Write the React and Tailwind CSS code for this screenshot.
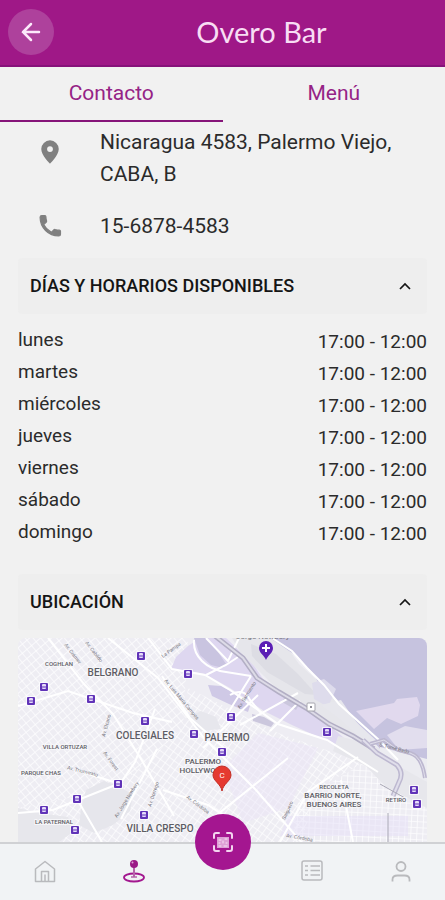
import { useState } from 'react';

const hours = [
  { day: 'lunes', time: '17:00 - 12:00' },
  { day: 'martes', time: '17:00 - 12:00' },
  { day: 'miércoles', time: '17:00 - 12:00' },
  { day: 'jueves', time: '17:00 - 12:00' },
  { day: 'viernes', time: '17:00 - 12:00' },
  { day: 'sábado', time: '17:00 - 12:00' },
  { day: 'domingo', time: '17:00 - 12:00' },
];

// map drawing units: 409 wide, origin at the top left corner of the map
const stations = [
  [123, 18], [170, 36], [26, 49], [13, 63], [73, 61], [127, 83], [176, 96], [213, 79], [309, 94],
  [204, 114], [100, 146], [59, 161], [26, 172], [126, 177], [57, 192], [396, 152], [399, 166],
];

const places = [
  { name: 'COGHLAN', x: 41, y: 28, small: true },
  { name: 'BELGRANO', x: 95, y: 38 },
  { name: 'COLEGIALES', x: 127, y: 101 },
  { name: 'PALERMO', x: 209, y: 103 },
  { name: 'VILLA ORTUZAR', x: 47, y: 111, small: true },
  { name: 'PARQUE CHAS', x: 23, y: 137, small: true },
  { name: 'PALERMO', x: 185, y: 126, medium: true },
  { name: 'HOLLYWOOD', x: 185, y: 135, medium: true },
  { name: 'LA PATERNAL', x: 36, y: 186, small: true },
  { name: 'VILLA CRESPO', x: 142, y: 194 },
  { name: 'RECOLETA', x: 316, y: 151, small: true },
  { name: 'BARRIO NORTE,', x: 315, y: 160, medium: true },
  { name: 'BUENOS AIRES', x: 316, y: 169, medium: true },
  { name: 'RETIRO', x: 378, y: 164, small: true },
];

const streets = [
  { name: 'Av. Crámer', x: 46, y: 7, angle: 52 },
  { name: 'Av. Cabildo', x: 67, y: 5, angle: 52 },
  { name: 'La Pampa', x: 145, y: 20, angle: -36 },
  { name: 'Av. Luis María Campos', x: 146, y: 43, angle: 50 },
  { name: 'Av. Elcano', x: 87, y: 99, angle: -75 },
  { name: 'Av. Forest', x: 85, y: 115, angle: 54 },
  { name: 'Av. Triunvirato', x: 49, y: 131, angle: 14 },
  { name: 'Av. Jorge Newbery', x: 99, y: 180, angle: -58 },
  { name: 'Av. Dorrego', x: 133, y: 169, angle: -72 },
  { name: 'Av. Córdoba', x: 168, y: 160, angle: 36 },
  { name: 'Av. Sarmiento', x: 222, y: 71, angle: -58 },
  { name: 'Av. Córdoba', x: 268, y: 199, angle: 10 },
  { name: 'Salguero', x: 267, y: 182, angle: -65 },
  { name: 'S. Tomé Bado', x: 361, y: 108, angle: 14 },
];

function Panel({ title, children }) {
  const [open, setOpen] = useState(true);

  return (
    <section>
      <h2>
        <button
          type="button"
          aria-expanded={open}
          onClick={() => setOpen(!open)}
          className="flex h-14 w-full items-center justify-between rounded-sm bg-[#eeeeee] pr-4 pl-3 text-lg font-medium text-[#151515]"
        >
          {title}
          <svg viewBox="0 0 12 12" className="size-3" fill="none" stroke="currentColor" strokeWidth="1.7">
            <path d="M1 9l5-5 5 5" />
          </svg>
        </button>
      </h2>
      {open && children}
    </section>
  );
}

function LocationMap() {
  return (
    <svg
      viewBox="0 0 409 262"
      role="img"
      aria-label="Mapa de Palermo"
      className="mt-2 block h-auto w-full rounded-lg font-['Roboto',sans-serif]"
    >
      <defs>
        <pattern id="gridWest" width="7" height="6" patternUnits="userSpaceOnUse" patternTransform="rotate(50)">
          <path d="M0 0H7M0 0V6" stroke="#fdfdfe" strokeWidth="1.6" />
        </pattern>
        <pattern id="gridMid" width="6" height="7" patternUnits="userSpaceOnUse" patternTransform="rotate(36)">
          <path d="M0 0H6M0 0V7" stroke="#fdfdfe" strokeWidth="1.6" />
        </pattern>
        <pattern id="gridEast" width="6" height="6" patternUnits="userSpaceOnUse" patternTransform="rotate(3)">
          <path d="M0 0H6M0 0V6" stroke="#fdfdfe" strokeWidth="1.6" />
        </pattern>
      </defs>

      <rect width="409" height="262" fill="#eeedf3" />
      <path d="M0 0H170L165 90L100 150L0 170Z" fill="url(#gridWest)" />
      <path d="M170 50L260 95L345 125L300 150L265 262H60L100 150L165 90Z" fill="url(#gridMid)" />
      <path d="M345 125L409 170V262H265L280 165Z" fill="url(#gridEast)" />
      <path d="M0 170L100 150L60 262H0Z" fill="url(#gridMid)" />
      <path d="M205 130l35-35 60 15-30 60-45 15z" fill="#e9e3f7" opacity=".45" />
      <path d="M270 178h120v20H262z" fill="#e6dff8" opacity=".5" />

      {/* parks and open ground */}
      <path d="M68 152l18-9 16 6 13 8-3 16-17 14-19 8-15-8 2-16z" fill="#e6e6ec" />
      <path d="M0 170l20 5 30 4 5 15-14 10H0z" fill="#e7e7ec" />
      <path d="M168 80l15-7 15 6 5 12-20 2z" fill="#e7e7ed" />
      <path d="M153 31l5-12 12-11 12-8h26l27 26 12 18 30 18 22 15 33 28-12 3-46-21-28-14-34-23-25-14-10-2z" fill="#ded7f0" />
      <path d="M176 0h12l12 14 8 12-3 4-12-3-11-10z" fill="#c9c4e0" />
      <path d="M190 47l13 1 17 9 12 11-2 6-19-8-17-8z" fill="#cfc9e6" />
      <path d="M234 76l12 3 10 6-3 4-18-6zM268 56l14 9-4 7-14-8z" fill="#cbc7dd" />
      <path d="M214 0h40l17 12 10 14 20 18 21 24 24 14 28 28-14-2-52-26-45-27-17-17-24-24z" fill="#e6e6eb" />
      <path d="M233 6l25 10 22 20 19 21-12-1-38-22-15-16z" fill="#dddde4" />
      <path d="M320 98l32 8 57 27v37l-42-22-19-20-33-15z" fill="#e7e7ec" />

      {/* river and docks */}
      <path d="M252 0h157v133l-46-21-23-26-14-17-16-17-8-5-8-13-14-15z" fill="#c6c3df" />
      <path d="M294 45l12-4 12 10-8 18-14-8z" fill="#dedcec" />
      <path d="M303 67l20-5 15 22 24 22-16-3-24-22z" fill="#e7e7ed" />
      <path d="M338 73l38-8 3-4 20-2 3 8-2 11-17 8-14-6-13 11z" fill="#e1d9ee" />
      <path d="M369 97l18-9 22 4v18l-28 2z" fill="#e2deee" />
      <path d="M362 109l47 12v23l-27-15-21-10z" fill="#ececf1" />

      {/* avenues */}
      <g fill="none" stroke="#ffffff" strokeWidth="2">
        <path d="M30 0l36 46 29 30 28 45 33 57M90 0l50 40 46 60 52 52 47 54" />
        <path d="M0 68l50-15 65 22 39 9M58 132l44 14 15-22 20-53M130 0l24 31 33 6 25 15 48 34 49 16 51 32" />
        <path d="M103 181l36-70M144 38l28 42 34 30M145 152l45 15 33 22M188 0l22 23 11-23M210 75l23-37M185 110l55-53M222 87l58-32M252 93l30-30" />
        <path d="M100 146l-65 26-35 3M59 161l25 43M262 204l28-50 50-35M335 204l-12-62M195 180l75-60" />
        <path d="M176 2q-1 12 8 21t24 11l25 4M188 37l20-10 12-8M212 57q14-8 20 5l12 14" />
        <path d="M254 0l20 13 15 17 17 17 15 19 40 36 19 20" />
      </g>

      {/* railway and motorway */}
      <g fill="none">
        <path d="M197 -2l28 22 14 20 22 14 27 16 23 16 24 12 21 13" stroke="#b3afc5" strokeWidth="5" />
        <path d="M197 -2l28 22 14 20 22 14 27 16 23 16 24 12 21 13" stroke="#dddbe7" strokeWidth="2" />
        <path d="M345 102l14 13 20 12q7 8 2 17l-6 14" stroke="#bdb8d0" strokeWidth="5" />
        <path d="M345 102l14 13 20 12q7 8 2 17l-6 14" stroke="#e0deeb" strokeWidth="2" />
        <path d="M352 106l14-4 14 10 12 3q12 3 15 25" stroke="#bdb8d0" strokeWidth="4" />
        <path d="M352 106l14-4 14 10 12 3q12 3 15 25" stroke="#e0deeb" strokeWidth="1" />
        <path d="M362 146l25 14M370 175v29" stroke="#a9a8b5" strokeWidth="1" />
      </g>
      <rect x="289" y="65" width="8" height="8" rx="1" fill="#ffffff" stroke="#a6a5ae" />
      <rect x="292" y="68" width="2" height="2" fill="#8d8d96" />

      <g fill="#77767e" fontSize="5">
        {streets.map(({ name, x, y, angle }) => (
          <text key={`${name}-${x}`} transform={`translate(${x} ${y}) rotate(${angle})`}>
            {name}
          </text>
        ))}
        <text x="218" y="1" fontSize="8">Jorge Newbery</text>
      </g>

      <g fill="#5d5c64" textAnchor="middle" stroke="#f6f6f9" strokeWidth="2" paintOrder="stroke">
        {places.map(({ name, x, y, small, medium }) => (
          <text key={`${name}-${y}`} x={x} y={y} fontSize={small ? 6 : medium ? 8 : 10} fontWeight="500">
            {name}
          </text>
        ))}
      </g>

      {stations.map(([x, y]) => (
        <g key={`${x}-${y}`} transform={`translate(${x} ${y})`}>
          <rect x="-5" y="-5" width="10" height="10" rx="1" fill="#ffffff" opacity=".7" />
          <rect x="-4" y="-4" width="8" height="8" rx="1" fill="#6134b8" />
          <rect x="-2" y="-3" width="4" height="5" rx="1" fill="#e6dcfa" />
          <path d="M-2 0h4" stroke="#6134b8" strokeWidth="1" />
        </g>
      ))}

      {/* airport */}
      <path d="M248 22c-2-5-7-7-7-12a7 7 0 0 1 14 0c0 5-5 7-7 12z" fill="#5b1fb5" />
      <path d="M248 6v8M244 10h8" stroke="#ffffff" strokeWidth="2" />

      {/* bar location */}
      <path d="M204 153c-1-7-9-10-9-16a9 9 0 0 1 18 0c0 6-8 9-9 16z" fill="#e53a30" stroke="#c22f27" strokeWidth="1" />
      <text x="204" y="140" textAnchor="middle" fontSize="8" fill="#ffffff">C</text>
    </svg>
  );
}

function BottomNav() {
  return (
    <nav className="grid h-[58px] shrink-0 grid-cols-5 items-center border-t-2 border-[#d0d1d4] bg-[#f1f3f5] text-[#b9babd]">
      <a href="#inicio" aria-label="Inicio" className="flex justify-center">
        <svg viewBox="0 0 24 24" className="size-6" fill="none" stroke="currentColor" strokeWidth="1.5" strokeLinejoin="round">
          <path d="M2.500 9L12 1.500 21.500 9v12.500h-19z" />
          <path d="M8.500 21.500v-10h7v10M12 14.500v7" />
        </svg>
      </a>
      <a href="#lugares" aria-label="Lugares" className="flex justify-center">
        <svg viewBox="0 0 24 24" className="size-6" fill="none" stroke="#a3178f">
          <ellipse cx="12" cy="17.500" rx="10" ry="4" strokeWidth="1.800" />
          <path d="M12 7v10" stroke="#b565aa" strokeWidth="2" />
          <path d="M9 17h6" stroke="#b565aa" strokeWidth="1.500" />
          <circle cx="12" cy="4" r="4" fill="#9b1a86" stroke="none" />
          <circle cx="10.500" cy="2.500" r="1" fill="#dda6d6" stroke="none" />
        </svg>
      </a>
      <div className="flex justify-center">
        <button
          type="button"
          aria-label="Escanear código"
          className="relative bottom-[30px] flex size-14 shrink-0 items-center justify-center rounded-full bg-[#a41690] text-[#f3d5ef]"
        >
          <svg viewBox="0 0 20 20" className="size-5" fill="none" stroke="currentColor" strokeWidth="2" strokeLinecap="round">
            <path d="M1 6V3q0-2 2-2h3M14 1h3q2 0 2 2v3M19 14v3q0 2-2 2h-3M6 19H3q-2 0-2-2v-3" />
            <rect x="4" y="5" width="12" height="11" fill="#dea0d6" stroke="none" />
            <path d="M6 8h2M12 7h2M6 11h1M10 9v2M13 11h1M6 14h2M11 14h3" stroke="#f7e3f5" strokeWidth="1" />
          </svg>
        </button>
      </div>
      <a href="#pedidos" aria-label="Pedidos" className="flex justify-center">
        <svg viewBox="0 0 24 24" className="size-6" fill="none" stroke="currentColor" strokeWidth="1.500">
          <rect x="2" y="1" width="20" height="19" rx="2" />
          <path d="M5 6h3M10.500 6H20M5 10.500h3M10.500 10.500H20M5 15h3M10.500 15H20" />
        </svg>
      </a>
      <a href="#perfil" aria-label="Perfil" className="flex justify-center">
        <svg viewBox="0 0 24 24" className="size-6" fill="none" stroke="currentColor" strokeWidth="1.800">
          <circle cx="12" cy="6.500" r="4.500" />
          <path d="M3.500 21.500v-2q0-4 5-4h7q5 0 5 4v2" />
        </svg>
      </a>
    </nav>
  );
}

export default function App() {
  return (
    <div className="flex h-screen flex-col bg-[#f1f1f1] font-['Roboto',sans-serif] text-[#2b2b2b]">
      <header className="flex shrink-0 items-center border-b-2 border-[#86127a] bg-[#9f1887] px-2 pt-[9px] pb-[10px]">
        <button
          type="button"
          aria-label="Volver"
          className="flex size-[46px] items-center justify-center rounded-full bg-[#ae419c] text-[#fce9fa]"
        >
          <svg viewBox="0 0 20 20" className="size-5" fill="none" stroke="currentColor" strokeWidth="2.500" strokeLinecap="round">
            <path d="M18 10H2M10 2l-8 8 8 8" />
          </svg>
        </button>
        <h1 className="flex-1 pl-8 text-center font-['Lato',sans-serif] text-[29px] leading-11 font-normal text-[#f8ddf4]">
          Overo Bar
        </h1>
      </header>

      <div role="tablist" className="grid shrink-0 grid-cols-2 text-[21px] text-[#952386]">
        <button type="button" role="tab" aria-selected="true" className="h-[55px] border-b-2 border-[#861579]">
          Contacto
        </button>
        <button type="button" role="tab" aria-selected="false" className="h-[55px] border-b-2 border-transparent">
          Menú
        </button>
      </div>

      <main className="min-h-0 flex-1 overflow-y-auto px-[18px] [scrollbar-width:none]">
        <address className="pt-1 text-[21px] leading-8 not-italic">
          <div className="flex items-start gap-9 pl-[18px]">
            <svg viewBox="0 0 24 24" className="mt-3 size-7 shrink-0" fill="#808080">
              <path d="M12 2a7.500 7.500 0 0 0-7.500 7.500C4.500 15 12 22 12 22s7.500-7 7.500-12.500A7.500 7.500 0 0 0 12 2zm0 10a2.500 2.500 0 1 1 0-5 2.500 2.500 0 0 1 0 5z" />
            </svg>
            <p>Nicaragua 4583, Palermo Viejo, CABA, B</p>
          </div>
          <div className="mt-5 flex items-center gap-9 pl-[18px]">
            <svg viewBox="0 0 24 24" className="size-7 shrink-0" fill="#808080" stroke="#808080" strokeWidth="1" strokeLinejoin="round">
              <path d="M6.600 10.800c1.400 2.800 3.800 5.100 6.600 6.600l2.200-2.200c.3-.3.700-.4 1-.2 1.100.4 2.300.6 3.600.6.600 0 1 .4 1 1V19c0 .900-.6 1.500-1.500 1.500C10.600 20.500 3.500 13.400 3.500 4.500 3.500 3.600 4.100 3 5 3h2.500c.600 0 1 .4 1 1 0 1.300.2 2.500.6 3.600.1.300 0 .700-.2 1z" />
            </svg>
            <p>15-6878-4583</p>
          </div>
        </address>

        <div className="mt-4">
          <Panel title="DÍAS Y HORARIOS DISPONIBLES">
            <table className="mt-3 w-full text-[19px] leading-8">
              <tbody>
                {hours.map(({ day, time }) => (
                  <tr key={day}>
                    <th scope="row" className="p-0 pb-1 text-left leading-7 font-normal">{day}</th>
                    <td className="p-0 text-right">{time}</td>
                  </tr>
                ))}
              </tbody>
            </table>
          </Panel>
        </div>

        <div className="mt-6">
          <Panel title="UBICACIÓN">
            <LocationMap />
          </Panel>
        </div>
      </main>

      <BottomNav />
    </div>
  );
}
